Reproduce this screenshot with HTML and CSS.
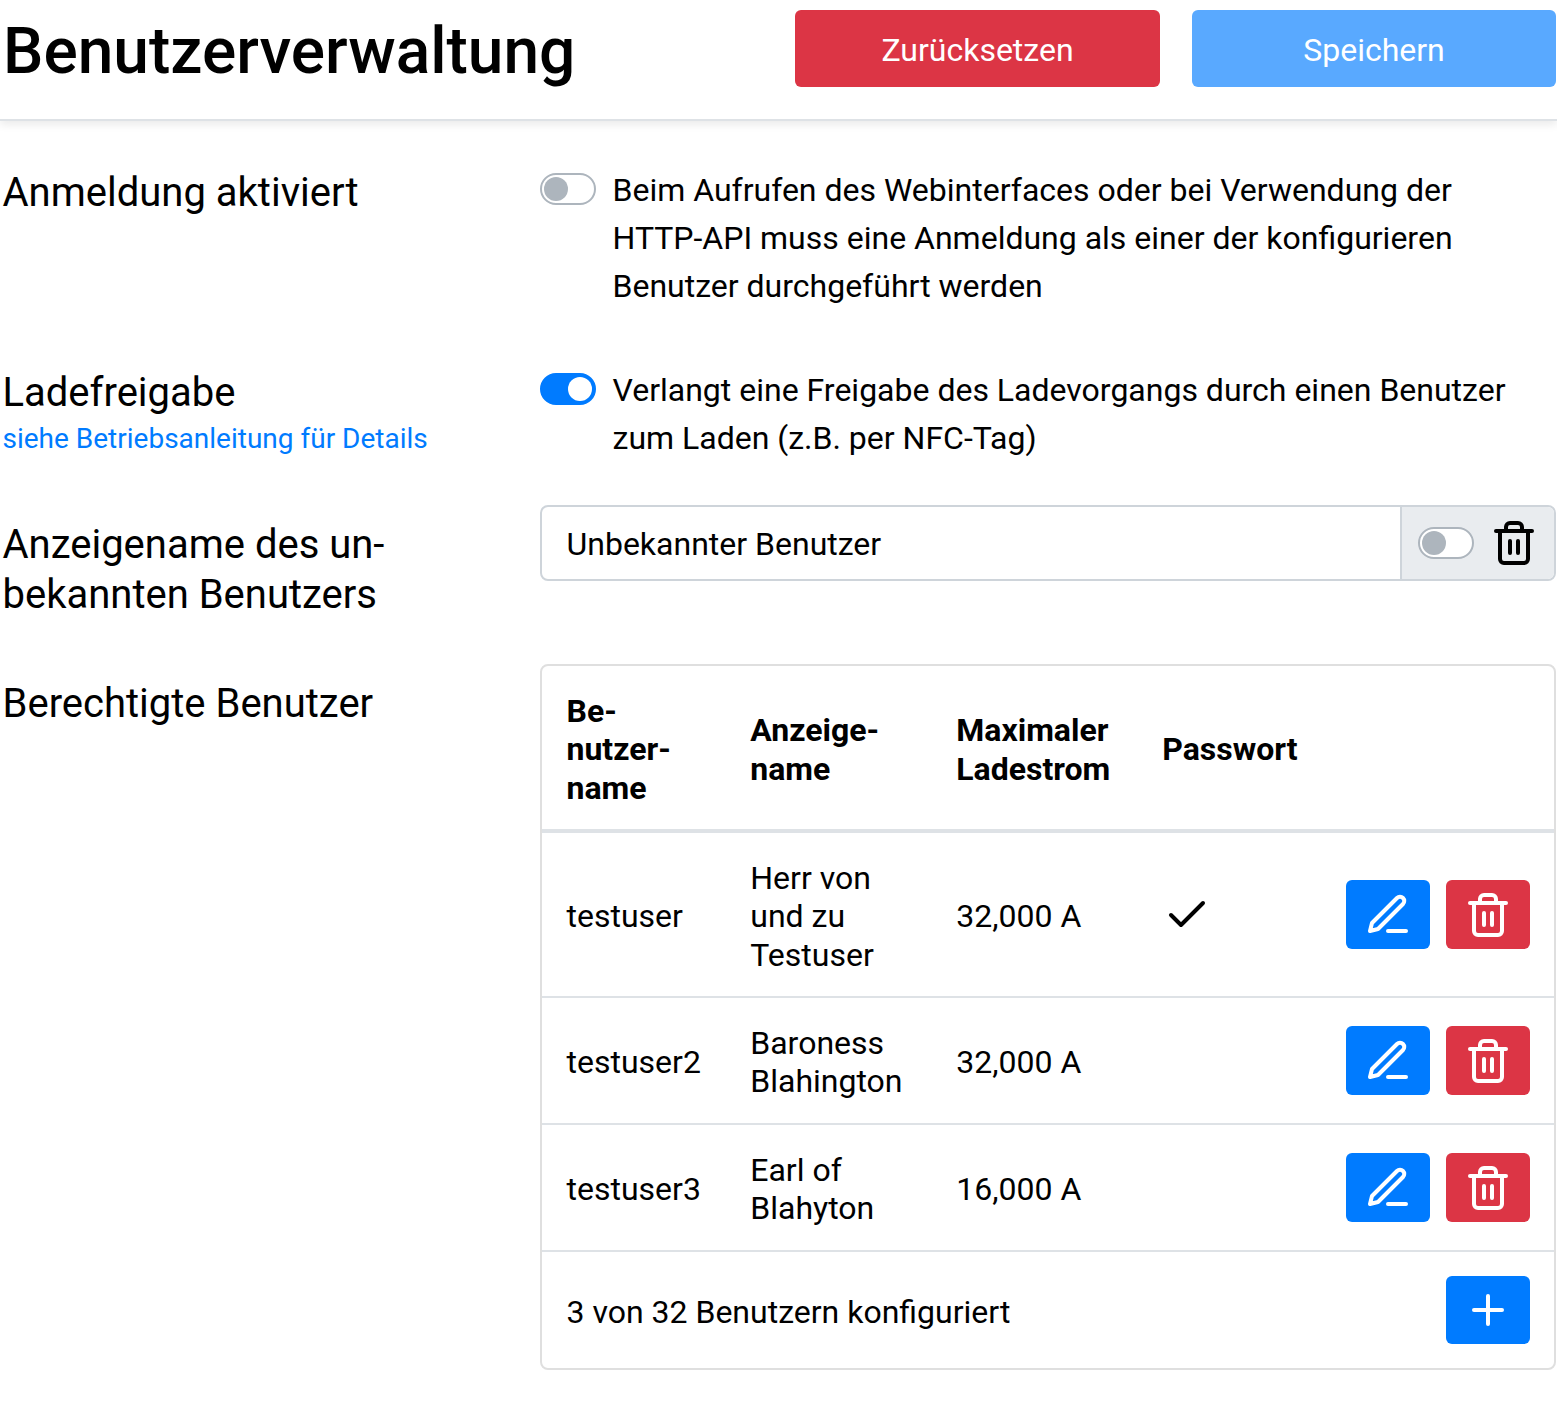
FILE: index.html
```html
<!DOCTYPE html>
<html lang="de">
<head>
    <meta charset="UTF-8">
    <title>Benutzerverwaltung</title>
    <link rel="stylesheet" href="styles.css">
</head>
<body>
    <svg class="icon-defs" width="0" height="0">
        <symbol id="i-trash" viewBox="0 0 24 24">
            <polyline points="3 6 5 6 21 6"></polyline>
            <path d="M19 6v14a2 2 0 0 1-2 2H7a2 2 0 0 1-2-2V6m3 0V4a2 2 0 0 1 2-2h4a2 2 0 0 1 2 2v2"></path>
            <line x1="10" y1="11" x2="10" y2="17"></line>
            <line x1="14" y1="11" x2="14" y2="17"></line>
        </symbol>
        <symbol id="i-edit" viewBox="0 0 24 24">
            <path d="M12 20h9"></path>
            <path d="M16.5 3.5a2.121 2.121 0 0 1 3 3L7 19l-4 1 1-4L16.5 3.5z"></path>
        </symbol>
        <symbol id="i-check" viewBox="0 0 24 24">
            <polyline points="20 6 9 17 4 12"></polyline>
        </symbol>
        <symbol id="i-plus" viewBox="0 0 24 24">
            <line x1="12" y1="5" x2="12" y2="19"></line>
            <line x1="5" y1="12" x2="19" y2="12"></line>
        </symbol>
    </svg>

    <header class="page-header">
        <h1>Benutzerverwaltung</h1>
        <div class="header-buttons">
            <button class="btn btn-danger btn-header" type="button">Zurücksetzen</button>
            <button class="btn btn-disabled btn-header" type="button">Speichern</button>
        </div>
    </header>

    <main class="settings">
        <section class="row row-login">
            <div class="label label-switch">Anmeldung aktiviert</div>
            <div class="switch-row">
                <span class="switch"></span>
                <p>Beim Aufrufen des Webinterfaces oder bei Verwendung der HTTP-API muss eine Anmeldung als einer der konfigurieren Benutzer durchgeführt werden</p>
            </div>
        </section>

        <section class="row row-release">
            <div class="label label-switch">Ladefreigabe<a class="label-link" href="#">siehe Betriebsanleitung für Details</a></div>
            <div class="switch-row">
                <span class="switch on"></span>
                <p>Verlangt eine Freigabe des Ladevorgangs durch einen Benutzer zum Laden (z.B. per NFC-Tag)</p>
            </div>
        </section>

        <section class="row row-anon">
            <div class="label label-form">Anzeigename des un&shy;bekannten Benutzers</div>
            <div class="input-group">
                <div class="input-text">Unbekannter Benutzer</div>
                <div class="input-addon">
                    <span class="switch"></span>
                    <svg class="icon"><use href="#i-trash"></use></svg>
                </div>
            </div>
        </section>

        <section class="row">
            <div class="label label-form">Berechtigte Benutzer</div>
            <div class="table-card">
                <table>
                    <colgroup>
                        <col class="col-user">
                        <col class="col-name">
                        <col class="col-current">
                        <col class="col-pass">
                        <col>
                    </colgroup>
                    <thead>
                        <tr>
                            <th>Be&shy;nutzer&shy;name</th>
                            <th>Anzeige&shy;name</th>
                            <th>Maximaler Ladestrom</th>
                            <th>Passwort</th>
                            <th></th>
                        </tr>
                    </thead>
                    <tbody>
                        <tr>
                            <td>testuser</td>
                            <td>Herr von und zu Testuser</td>
                            <td>32,000 A</td>
                            <td><svg class="icon check"><use href="#i-check"></use></svg></td>
                            <td class="actions">
                                <button class="btn btn-primary btn-icon" type="button"><svg class="icon"><use href="#i-edit"></use></svg></button>
                                <button class="btn btn-danger btn-icon" type="button"><svg class="icon"><use href="#i-trash"></use></svg></button>
                            </td>
                        </tr>
                        <tr>
                            <td>testuser2</td>
                            <td>Baroness Blahington</td>
                            <td>32,000 A</td>
                            <td></td>
                            <td class="actions">
                                <button class="btn btn-primary btn-icon" type="button"><svg class="icon"><use href="#i-edit"></use></svg></button>
                                <button class="btn btn-danger btn-icon" type="button"><svg class="icon"><use href="#i-trash"></use></svg></button>
                            </td>
                        </tr>
                        <tr>
                            <td>testuser3</td>
                            <td>Earl of Blahyton</td>
                            <td>16,000 A</td>
                            <td></td>
                            <td class="actions">
                                <button class="btn btn-primary btn-icon" type="button"><svg class="icon"><use href="#i-edit"></use></svg></button>
                                <button class="btn btn-danger btn-icon" type="button"><svg class="icon"><use href="#i-trash"></use></svg></button>
                            </td>
                        </tr>
                    </tbody>
                </table>
                <div class="table-footer">
                    <span class="footer-text">3 von 32 Benutzern konfiguriert</span>
                    <button class="btn btn-primary btn-icon btn-add" type="button"><svg class="icon"><use href="#i-plus"></use></svg></button>
                </div>
            </div>
        </section>
    </main>
</body>
</html>
```

FILE: styles.css
```css
* {
    box-sizing: border-box;
}
body {
    margin: 0;
    background-color: #fff;
    color: #000;
    font-family: Roboto, "Liberation Sans", sans-serif;
    font-size: 32px;
    line-height: 48px;
}
.icon-defs {
    position: absolute;
}
.icon {
    display: block;
    width: 48px;
    height: 48px;
    fill: none;
    stroke: currentColor;
    stroke-width: 2;
    stroke-linecap: round;
    stroke-linejoin: round;
}

/* header */
.page-header {
    display: flex;
    justify-content: space-between;
    align-items: flex-start;
    height: 121px;
    padding: 10px 1px 0 3px;
    border-bottom: 2px solid #dee2e6;
    box-shadow: 0 4px 8px rgba(0, 0, 0, 0.08);
}
h1 {
    margin: 0;
    padding-top: 3px;
    font-size: 64px;
    font-weight: 500;
    line-height: 77px;
}
.header-buttons {
    display: flex;
    gap: 32px;
}
.btn {
    border: none;
    border-radius: 6px;
    color: #fff;
    font: inherit;
    cursor: pointer;
}
.btn-header {
    width: 365px;
    height: 77px;
    padding-top: 4px;
}
.btn-header + .btn-header {
    width: 364px;
}
.btn-danger {
    background-color: #dc3545;
}
.btn-primary {
    background-color: #007bff;
}
.btn-disabled {
    background-color: #59a9ff;
}
.btn-icon {
    display: flex;
    align-items: center;
    justify-content: center;
    width: 84px;
    height: 69px;
    padding: 0;
}

/* rows */
.settings {
    padding: 45px 1px 34px 2.5px;
}
.row {
    display: grid;
    grid-template-columns: 537.5px 1fr;
}
.row-login {
    margin-bottom: 56px;
}
.row-release {
    margin-bottom: 43px;
}
.row-anon {
    margin-bottom: 31px;
}
.label {
    padding-right: 30px;
    font-size: 40px;
    line-height: 50px;
    hyphens: manual;
}
.label-switch {
    padding-top: 2px;
}
.label-form {
    padding-top: 15px;
    padding-bottom: 13px;
}
.label-link {
    display: block;
    color: #007bff;
    font-size: 28px;
    line-height: 42px;
    text-decoration: none;
}
.switch-row {
    display: flex;
    gap: 16.5px;
}
.switch-row p {
    margin: 0;
    padding-right: 16px;
}
.switch-row .switch {
    margin-top: 7px;
}
.switch {
    position: relative;
    flex: none;
    display: block;
    width: 56px;
    height: 32px;
    border: 2px solid #adb5bd;
    border-radius: 16px;
    background-color: #fff;
}
.switch::after {
    content: "";
    position: absolute;
    top: 2px;
    left: 2px;
    width: 24px;
    height: 24px;
    border-radius: 50%;
    background-color: #adb5bd;
}
.switch.on {
    border-color: #007bff;
    background-color: #007bff;
}
.switch.on::after {
    left: 26px;
    background-color: #fff;
}

/* input */
.input-group {
    display: flex;
    height: 76px;
    border: 2px solid #ced4da;
    border-radius: 8px;
    overflow: hidden;
}
.input-text {
    flex: 1;
    padding: 13px 24.5px;
}
.input-addon {
    display: flex;
    align-items: center;
    gap: 16px;
    width: 154px;
    padding-left: 16px;
    border-left: 2px solid #ced4da;
    background-color: #e9ecef;
}

/* table */
.table-card {
    height: 706px;
    border: 2px solid #dfdfdf;
    border-radius: 8px;
}
table {
    width: 100%;
    border-collapse: separate;
    border-spacing: 0;
    table-layout: fixed;
    line-height: 38.4px;
}
.col-user {
    width: 184px;
}
.col-name,
.col-current {
    width: 206px;
}
.col-pass {
    width: 184px;
}
th,
td {
    padding: 25.5px 24px 22.5px 24.25px;
    text-align: left;
    vertical-align: middle;
    hyphens: manual;
}
th {
    height: 167px;
    padding-top: 26px;
    padding-bottom: 22px;
    border-bottom: 4px solid #dee2e6;
    font-weight: 700;
}
td {
    border-bottom: 2px solid #dee2e6;
}
th:first-child,
td:first-child {
    padding-left: 24.5px;
}
.check {
    margin-top: -3px;
    margin-left: 0.75px;
}
.actions {
    padding: 0 24.5px 0 0;
    text-align: right;
    white-space: nowrap;
    font-size: 0;
}
.actions .btn {
    display: inline-flex;
    vertical-align: middle;
}
.actions .btn + .btn {
    margin-left: 16px;
}
.table-footer {
    display: flex;
    justify-content: space-between;
    align-items: center;
    padding: 24px;
}
.footer-text {
    padding-top: 4px;
    padding-left: 0.5px;
}
.btn-add {
    height: 68px;
}
```
